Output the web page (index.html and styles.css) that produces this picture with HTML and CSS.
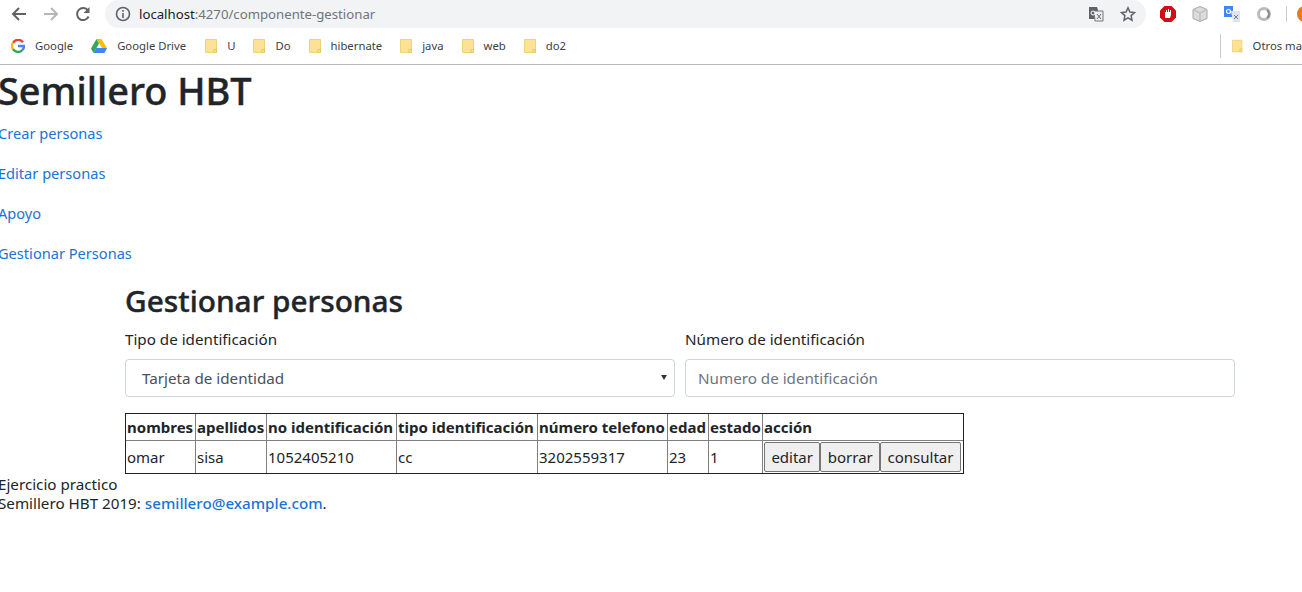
FILE: index.html
```html
<!DOCTYPE html>
<html lang="es">
  <head>
    <meta charset="UTF-8" />
    <title>Semillero HBT</title>
    <link rel="stylesheet" href="styles.css">
  </head>
  <body>
    <svg width="0" height="0" class="defs">
      <symbol id="folder" viewBox="0 0 12 14">
        <path d="M.5.5h11v13H.5z" fill="#fde293" stroke="#f0d27a"/>
        <path d="M9 13.5v-3h2.5v3z" fill="#fde293" stroke="#e8c766"/>
      </symbol>
    </svg>

    <header class="browser">
      <div class="toolbar">
        <svg class="nav" width="16" height="16" viewBox="0 0 16 16"><path d="M15 8H2M8 2 2 8l6 6" fill="none" stroke="#5f6368" stroke-width="2"/></svg>
        <svg class="nav" width="16" height="16" viewBox="0 0 16 16"><path d="M1 8h13M8 2l6 6-6 6" fill="none" stroke="#b4b6b9" stroke-width="2"/></svg>
        <svg class="nav" width="16" height="16" viewBox="0 0 16 16"><path d="M13.6 10.500A6 6 0 1 1 13 4.600" fill="none" stroke="#5f6368" stroke-width="2"/><path d="M14.500 1v6h-6z" fill="#5f6368"/></svg>
        <div class="omnibox">
          <svg width="16" height="16" viewBox="0 0 16 16"><circle cx="8" cy="8" r="6.500" fill="none" stroke="#5f6368" stroke-width="1.600"/><path d="M8 7v5M8 4v1.800" stroke="#5f6368" stroke-width="1.600"/></svg>
          <span class="url"><span class="host">localhost</span>:4270/componente-gestionar</span>
          <svg class="translate" width="16" height="16" viewBox="0 0 16 16"><path d="M1 1h8l1 3v9H1z" fill="#5f6368"/><path d="M6 5h9v10H7z" fill="#eee" stroke="#777"/><circle cx="5" cy="7" r="2" fill="none" stroke="#fff"/><path d="m9 8 4 5m0-5-4 5" stroke="#666"/></svg>
          <svg class="star" width="16" height="16" viewBox="0 0 16 16"><path d="m8 1.800 1.900 4.200 4.600.5-3.400 3.100.9 4.600L8 11.900l-4 2.300.9-4.600-3.400-3.100 4.600-.5z" fill="none" stroke="#5f6368" stroke-width="1.500"/></svg>
        </div>
        <div class="extensions">
          <svg width="18" height="18" viewBox="0 0 18 18"><path d="M5.500 1h7L17 5.500v7L12.500 17h-7L1 12.500v-7z" fill="#d40d12"/><path d="M6 13V7h1V5h1v2h1V4h1v3h1V5h1v5l-1 3z" fill="#fff"/></svg>
          <svg width="18" height="18" viewBox="0 0 18 18"><path d="m9 1.500 7 3v9l-7 3-7-3v-9z" fill="#dcdcdc" stroke="#a8a8a8"/><path d="M2 4.500 9 8l7-3.500M9 8v8.500" fill="none" stroke="#b5b5b5"/></svg>
          <svg width="18" height="18" viewBox="0 0 18 18"><path d="M1 1h9v11H1z" fill="#4285f4"/><path d="M8 6h9v11H10z" fill="#dfe3ea"/><circle cx="5.500" cy="6.500" r="2" fill="none" stroke="#fff" stroke-width="1.200"/><path d="m11 10 4 4m0-4-4 4" stroke="#6f7c91"/></svg>
          <svg width="18" height="18" viewBox="0 0 18 18"><circle cx="9" cy="9" r="5.500" fill="none" stroke="#bbb" stroke-width="3"/><path d="M12 5a5 5 0 0 1 0 8" fill="none" stroke="#888" stroke-width="2"/></svg>
          <span class="sep"></span>
          <span class="avatar"></span>
        </div>
      </div>
      <nav class="bookmarks">
        <a class="mark">
          <svg width="14" height="14" viewBox="0 0 14 14" fill="none" stroke-width="2.400"><path d="M12 3.300A6 6 0 0 0 2 3.800" stroke="#ea4335"/><path d="M2 3.800a6 6 0 0 0 0 6.400" stroke="#fbbc05"/><path d="M2 10.200a6 6 0 0 0 9.400.8" stroke="#34a853"/><path d="M11.400 11A6 6 0 0 0 13 7H7" stroke="#4285f4"/></svg>
          Google
        </a>
        <a class="mark">
          <svg width="16" height="14" viewBox="0 0 16 14"><path d="M5.500 0h5L16 9h-5z" fill="#fbbc05"/><path d="M5.500 0 0 9.500 2.500 14 8 4.500z" fill="#34a853"/><path d="M2.500 14h11l2.500-5H5.300z" fill="#4285f4"/></svg>
          Google Drive
        </a>
        <a class="mark"><svg width="12" height="14"><use href="#folder"/></svg>U</a>
        <a class="mark"><svg width="12" height="14"><use href="#folder"/></svg>Do</a>
        <a class="mark"><svg width="12" height="14"><use href="#folder"/></svg>hibernate</a>
        <a class="mark"><svg width="12" height="14"><use href="#folder"/></svg>java</a>
        <a class="mark"><svg width="12" height="14"><use href="#folder"/></svg>web</a>
        <a class="mark"><svg width="12" height="14"><use href="#folder"/></svg>do2</a>
        <span class="others"><a class="mark"><svg width="12" height="14"><use href="#folder"/></svg>Otros ma</a></span>
      </nav>
    </header>

    <div class="app">
      <h1>Semillero HBT</h1>
      <p><a href="#">Crear personas</a></p>
      <p><a href="#">Editar personas</a></p>
      <p><a href="#">Apoyo</a></p>
      <p><a href="#">Gestionar Personas</a></p>

      <main class="gestionar">
        <h2>Gestionar personas</h2>
        <div class="form-row">
          <div class="form-group">
            <label>Tipo de identificación</label>
            <div class="form-control select">Tarjeta de identidad</div>
          </div>
          <div class="form-group">
            <label>Número de identificación</label>
            <div class="form-control placeholder">Numero de identificación</div>
          </div>
        </div>
        <table>
          <colgroup>
            <col class="col-nombres" />
            <col class="col-apellidos" />
            <col class="col-numero" />
            <col class="col-tipo" />
            <col class="col-telefono" />
            <col class="col-edad" />
            <col class="col-estado" />
            <col />
          </colgroup>
          <thead>
            <tr>
              <th>nombres</th>
              <th>apellidos</th>
              <th>no identificación</th>
              <th>tipo identificación</th>
              <th>número telefono</th>
              <th>edad</th>
              <th>estado</th>
              <th>acción</th>
            </tr>
          </thead>
          <tbody>
            <tr>
              <td>omar</td>
              <td>sisa</td>
              <td>1052405210</td>
              <td>cc</td>
              <td>3202559317</td>
              <td>23</td>
              <td>1</td>
              <td class="actions"><button>editar</button><button>borrar</button><button>consultar</button></td>
            </tr>
          </tbody>
        </table>
      </main>

      <footer>
        Ejercicio practico<br />
        Semillero HBT 2019: <a href="#">semillero@example.com</a>.
      </footer>
    </div>
  </body>
</html>
```
FILE: styles.css
```css
* {
  box-sizing: border-box;
}
html,
body {
  overflow: hidden;
}
body {
  margin: 0;
  height: 592px;
  color: #212529;
  background-color: #fff;
  font-family: "Noto Sans", sans-serif;
  font-size: 15px;
  line-height: 24px;
}
a {
  color: #1a73d8;
  text-decoration: none;
}
.defs {
  display: block;
  height: 0;
}
.browser {
  border-bottom: 1px solid #b8b8b8;
  height: 65px;
}
.toolbar {
  display: flex;
  align-items: center;
  height: 28px;
  padding-left: 11px;
  overflow: hidden;
}
.toolbar svg,
.toolbar span {
  flex: none;
}
.nav {
  margin-right: 16px;
}
.omnibox {
  display: flex;
  flex: none;
  align-items: center;
  width: 1041px;
  height: 28px;
  margin-left: -2px;
  padding: 0 10px;
  border-radius: 14px;
  background-color: #f1f3f4;
  font-size: 13.200px;
  color: #70757a;
}
.toolbar .url {
  margin-left: 8px;
  flex: 1;
}
.toolbar .host {
  color: #202124;
}
.star {
  margin-left: 16px;
}
.extensions {
  display: flex;
  flex: none;
  align-items: center;
  gap: 14px;
  margin-left: 13px;
}
.toolbar .sep {
  width: 1px;
  height: 16px;
  background-color: #ccc;
  margin-left: -1px;
}
.toolbar .avatar {
  width: 16px;
  height: 16px;
  border-radius: 50%;
  background-color: #e8791c;
  margin-left: -4px;
}
.bookmarks {
  display: flex;
  align-items: center;
  height: 36px;
  padding-left: 11px;
  font-size: 11.300px;
  white-space: nowrap;
  overflow: hidden;
}
.mark {
  display: flex;
  flex: none;
  align-items: center;
  gap: 10px;
  margin-right: 18px;
  color: #3c4043;
}
.mark:nth-child(2) {
  margin-right: 19px;
}
.others {
  flex: none;
  width: 82px;
  margin-left: auto;
  padding-left: 11px;
  border-left: 1px solid #ccc;
  overflow: hidden;
}
.others .mark {
  margin-right: 0;
}
.app {
  margin-left: -2px;
  font-size: 14.600px;
}
h1 {
  margin: 0 0 8px;
  height: 48px;
  padding-top: 1px;
  font-size: 37.900px;
  font-weight: 500;
  line-height: 48px;
  -webkit-text-stroke: 0.4px;
}
p {
  margin: 0 0 16px;
}
.gestionar {
  margin-left: 127px;
  width: 1110px;
  padding-top: 1px;
  font-size: 15.200px;
}
h2 {
  margin: 0 0 6.500px;
  font-size: 29.800px;
  font-weight: 500;
  line-height: 38px;
  -webkit-text-stroke: 0.4px;
}
.form-row {
  display: flex;
  gap: 10px;
}
.form-group {
  flex: 1;
  margin-bottom: 16px;
}
label {
  display: block;
  margin-bottom: 8.500px;
}
.form-control {
  display: flex;
  align-items: center;
  height: 38px;
  padding: 0 12px;
  border: 1px solid #ced4da;
  border-radius: 4px;
  color: #495057;
}
.select {
  padding-left: 16px;
  position: relative;
}
.select::after {
  content: "";
  position: absolute;
  right: 7px;
  top: 15px;
  border-style: solid;
  border-width: 5px 3px 0;
  border-color: #333 transparent transparent;
}
.placeholder {
  color: #6c757d;
}
table {
  border-collapse: collapse;
  outline: 1px solid #222;
  outline-offset: -1px;
  table-layout: fixed;
  width: 839px;
  font-size: 15px;
}
.col-nombres {
  width: 70px;
}
.col-apellidos {
  width: 71px;
}
.col-numero {
  width: 130px;
}
.col-tipo {
  width: 141px;
}
.col-telefono {
  width: 130px;
}
.col-edad {
  width: 41px;
}
.col-estado {
  width: 54px;
}
th,
td {
  border: 1px solid #808080;
  padding: 1px;
  text-align: left;
  white-space: nowrap;
}
th {
  font-weight: 700;
}
.actions {
  padding: 1px;
}
button {
  height: 30px;
  padding: 0 6.400px;
  font: inherit;
  color: #212529;
  background-color: #efefef;
  border: 1px solid #767676;
  border-radius: 2px;
}
footer {
  margin-top: 1px;
  font-size: 15.200px;
  line-height: 19px;
}
footer a {
  font-weight: 500;
}
```
